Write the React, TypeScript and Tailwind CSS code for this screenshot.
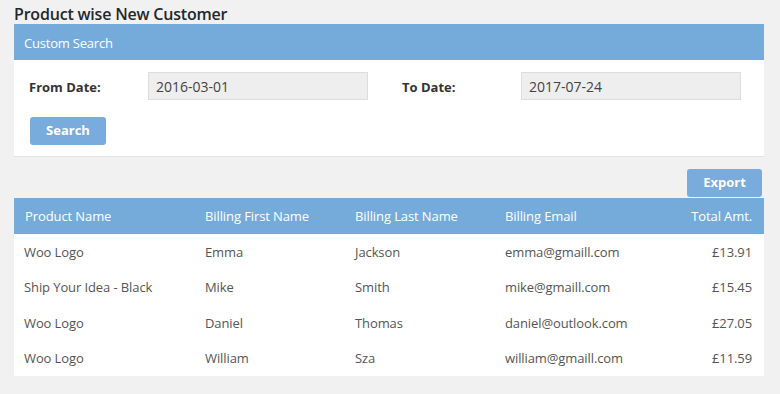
const rows = [
  { product: "Woo Logo", first: "Emma", last: "Jackson", email: "emma@gmaill.com", total: "£13.91" },
  { product: "Ship Your Idea - Black", first: "Mike", last: "Smith", email: "mike@gmaill.com", total: "£15.45" },
  { product: "Woo Logo", first: "Daniel", last: "Thomas", email: "daniel@outlook.com", total: "£27.05" },
  { product: "Woo Logo", first: "William", last: "Sza", email: "william@gmaill.com", total: "£11.59" },
];

export default function App() {
  return (
    <div
      className="min-h-[394px] bg-[#f1f1f1] pl-[14px] pr-[16px] text-[#444]"
      style={{ fontFamily: '"Open Sans", "Noto Sans", sans-serif' }}
    >
      <h2 className="pt-[4px] h-[24px] text-[16px] leading-[20px] font-semibold text-[#23282d] tracking-[-0.2px]">
        Product wise New Customer
      </h2>

      <div className="bg-white border-b border-[#e2e2e2]">
        <div className="h-[36px] bg-[#75abdb] px-[10px] pt-[3px] flex items-center text-[13px] text-white tracking-[-0.2px]">
          Custom Search
        </div>
        <div className="px-[15px] pt-[12px] pb-[11px]">
          <div className="flex items-center h-[28px]">
            <div className="w-[119px] pt-[4px] text-[13px] font-bold text-[#333]">From Date:</div>
            <div className="w-[220px] h-[28px] bg-[#eeeeee] border border-[#dddddd] px-[7px] flex items-center text-[14px] text-[#444]">
              2016-03-01
            </div>
            <div className="w-[34px]" />
            <div className="w-[119px] pt-[4px] text-[13px] font-bold text-[#333]">To Date:</div>
            <div className="w-[220px] h-[28px] bg-[#eeeeee] border border-[#dddddd] px-[7px] flex items-center text-[14px] text-[#444]">
              2017-07-24
            </div>
          </div>
          <button className="mt-[17px] ml-[1px] w-[76px] h-[28px] rounded-[3px] bg-[#79acdc] text-white text-[13px] font-bold">
            Search
          </button>
        </div>
      </div>

      <div className="flex justify-end pt-[12px] pb-[1px] pr-[2px]">
        <button className="w-[75px] h-[28px] rounded-[3px] bg-[#79acdc] text-white text-[13px] font-bold">
          Export
        </button>
      </div>

      <table className="w-full bg-white text-[13px] border-collapse tracking-[-0.1px]">
        <thead>
          <tr className="h-[36px] bg-[#75abdb] text-white">
            <th className="w-[191px] pl-[11px] pt-[2px] text-left font-normal">Product Name</th>
            <th className="w-[150px] pt-[2px] text-left font-normal">Billing First Name</th>
            <th className="w-[150px] pt-[2px] text-left font-normal">Billing Last Name</th>
            <th className="pt-[2px] text-left font-normal">Billing Email</th>
            <th className="pr-[12px] pt-[2px] text-right font-normal">Total Amt.</th>
          </tr>
        </thead>
        <tbody>
          {rows.map((r, i) => (
            <tr key={i} className="h-[35.5px] text-[#555]">
              <td className="pl-[10px] pt-[1px]">{r.product}</td>
              <td className="pt-[1px]">{r.first}</td>
              <td className="pt-[1px]">{r.last}</td>
              <td className="pt-[1px]">{r.email}</td>
              <td className="pr-[12px] pt-[1px] text-right">{r.total}</td>
            </tr>
          ))}
        </tbody>
      </table>
    </div>
  );
}
